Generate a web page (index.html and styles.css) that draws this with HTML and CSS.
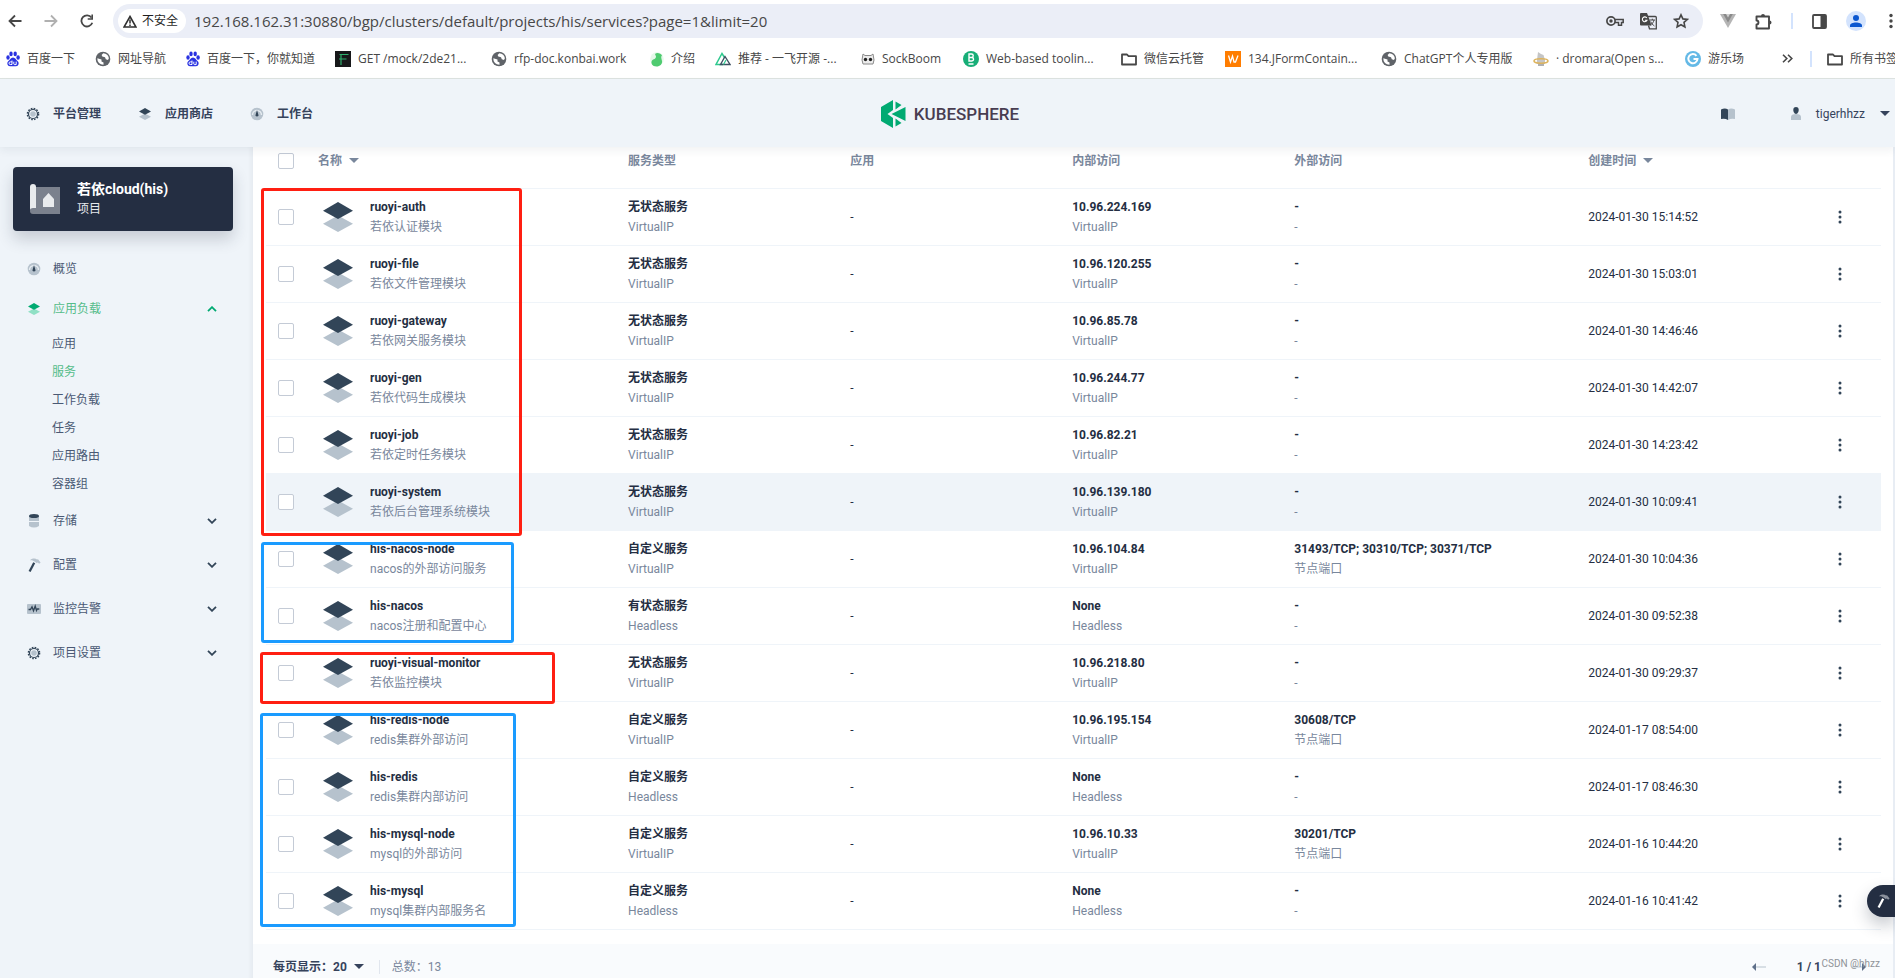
FILE: index.html
```html
<!DOCTYPE html>
<html lang="zh-CN">
<head>
<meta charset="utf-8">
<title>KubeSphere</title>
<link rel="stylesheet" href="styles.css">
</head>
<body>
<svg class="sprite" aria-hidden="true">
  <symbol id="i-layers" viewBox="0 0 30 30"><path fill="#b6c2cd" d="M15 13.500l15 8.200-15 8.300-15-8.300z"/><path fill="#324558" d="M15 0l15 8.700-15 8.300L0 8.700z"/></symbol>
  <symbol id="i-layers-green" viewBox="0 0 30 30"><path fill="#90e0c5" d="M15 13.500l15 8.200-15 8.300-15-8.300z"/><path fill="#00aa72" d="M15 0l15 8.700-15 8.300L0 8.700z"/></symbol>
  <symbol id="i-gear" viewBox="0 0 14 14"><circle cx="7" cy="7" r="5.500" fill="none" stroke="#324558" stroke-width="1.600" stroke-dasharray="1.600 1.280"/><circle cx="7" cy="7" r="4.500" fill="#eff4f9" stroke="#324558" stroke-width="1.200"/><circle cx="7" cy="7" r="2.800" fill="#b6c2cd"/></symbol>
  <symbol id="i-gauge" viewBox="0 0 14 14"><circle cx="7" cy="7" r="6.300" fill="#b6c2cd"/><path d="M2.500 8a4.500 4.500 0 0 1 9 0" fill="none" stroke="#e6ecf1" stroke-width="1.400"/><path d="M7 3l1.300 4.500a1.400 1.400 0 1 1-2.600 0z" fill="#324558"/></symbol>
  <symbol id="i-hammer" viewBox="0 0 14 14"><path fill="#324558" d="M6.200 4.300l2 .9L3.600 14l-2-.9z"/><path fill="#b6c2cd" d="M3 2.200C6 0 8.500.4 10 1.600l1-.3 2.600 3.200-1.500 1.300-1.300-1.300-1.200.6-1.700-1.400C6.800 2.600 5 2 3 2.200z"/></symbol>
  <symbol id="i-globe" viewBox="0 0 16 16"><circle cx="8" cy="8" r="7.300" fill="#5f6368"/><path fill="#fff" d="M2.300 7.300l4.200 1.300v1.800l2 1v2.300a6 6 0 0 1-6.200-6.400zM8.300 2.200L6.600 4l.7 1.500 2.700.7.800 2 2.200.8.900-1.700A6 6 0 0 0 8.300 2.200z"/></symbol>
  <symbol id="i-paw" viewBox="0 0 14 16"><g fill="#2932e1"><ellipse cx="2" cy="6.500" rx="1.700" ry="2.200"/><ellipse cx="5" cy="2.900" rx="1.700" ry="2.300"/><ellipse cx="9.200" cy="2.900" rx="1.700" ry="2.300"/><ellipse cx="12.100" cy="6.500" rx="1.700" ry="2.200"/><path d="M7 6.500c2.300 0 2.900 2.300 4.500 3.500 2.200 1.900 1 5.200-1.500 5.200H4C1.500 15.200.3 11.900 2.500 10 4.200 8.800 4.700 6.500 7 6.500z"/></g><path d="M6 9.500v4H4.300a1.200 1.200 0 0 1 0-2.600H6M7.800 10.700v2.200q0 .7.800.7h1.600v-3" fill="none" stroke="#fff"/></symbol>
  <symbol id="i-folder" viewBox="0 0 16 16"><path d="M1 3.500h5l1.500 1.700H15v8.300H1z" fill="none" stroke="#474747" stroke-width="1.800" stroke-linejoin="round"/></symbol>
  <symbol id="i-dots" viewBox="0 0 4 14"><g fill="#324558"><circle cx="2" cy="2" r="1.500"/><circle cx="2" cy="7" r="1.500"/><circle cx="2" cy="12" r="1.500"/></g></symbol>
  <symbol id="i-down" viewBox="0 0 10 6"><path d="M1 .8l4 4 4-4" fill="none" stroke="#324558" stroke-width="1.800"/></symbol>
</svg>

<div class="chrome">
  <div class="toolbar">
    <button class="tb" aria-label="后退"><svg width="14" height="14" viewBox="0 0 14 14"><path d="M13.500 7H2M7 1.500L1.500 7 7 12.500" fill="none" stroke="#474747" stroke-width="1.800"/></svg></button>
    <button class="tb" aria-label="前进"><svg width="14" height="14" viewBox="0 0 14 14"><path d="M.5 7H12M7 1.500L12.500 7 7 12.500" fill="none" stroke="#b0b0b0" stroke-width="1.800"/></svg></button>
    <button class="tb" aria-label="刷新"><svg width="14" height="14" viewBox="0 0 14 14"><path d="M12.300 8.800A5.600 5.600 0 1 1 11.500 3.500" fill="none" stroke="#474747" stroke-width="1.800"/><path d="M13 .5v5.300H7.700V4.200h3.700V.5z" fill="#474747"/></svg></button>
    <div class="omnibox">
      <button class="chip"><svg width="14" height="13" viewBox="0 0 14 13"><path d="M7 1.500L13 12H1z" fill="none" stroke="#303030" stroke-width="1.600"/><path d="M7 4.500v4M7 9.500v1.500" stroke="#303030" stroke-width="1.500"/></svg>不安全</button>
      <input class="url" type="text" aria-label="地址" value="192.168.162.31:30880/bgp/clusters/default/projects/his/services?page=1&amp;limit=20">
      <button class="tb" aria-label="密码"><svg width="18" height="12" viewBox="0 0 18 12"><circle cx="5" cy="6" r="4.100" fill="none" stroke="#474747" stroke-width="1.700"/><circle cx="5" cy="6" r="1.700" fill="#474747"/><path d="M9 4.600h8.200v2.800H15.500v2.800h-3V7.400H9" fill="none" stroke="#474747" stroke-width="1.500"/></svg></button>
      <button class="tb" aria-label="翻译"><svg width="17" height="17" viewBox="0 0 17 17"><path fill="#474747" d="M1 0h6l1 2.500 3.500 10H1a1 1 0 0 1-1-1V1a1 1 0 0 1 1-1z"/><path d="M8 3.500h7.300a1 1 0 0 1 1 1v11.300H9.500L8.500 12.500" fill="none" stroke="#474747" stroke-width="1.300"/><path d="M6.800 5A2.400 2.400 0 1 0 7 7.200H4.900" fill="none" stroke="#fff" stroke-width="1.100"/><path d="M9.500 7h5.500M12.300 5.700V7M14 7c-.5 2.500-2 4-3.500 5M10.700 8.500c.8 2 2 3.300 3.700 4.500" fill="none" stroke="#474747"/></svg></button>
      <button class="tb" aria-label="收藏"><svg width="16" height="16" viewBox="0 0 16 16"><path d="M8 1.800l1.900 4.100 4.400.5-3.300 3 .9 4.500L8 11.700l-3.900 2.200.9-4.500-3.300-3 4.400-.5z" fill="none" stroke="#474747" stroke-width="1.600"/></svg></button>
    </div>
    <div class="exts">
      <button class="tb" aria-label="Vue"><svg width="16" height="14" viewBox="0 0 16 14"><path fill="#b5b5b5" d="M0 0h16L8 14z"/><path fill="#8a8a8a" d="M3.200 0h9.600L8 8.500z"/><path fill="#d0d0d0" d="M6 0h4L8 3.500z"/></svg></button>
      <button class="tb" aria-label="扩展程序"><svg width="17" height="17" viewBox="0 0 17 17"><path d="M1.500 3.500H14v12H1.500v-4c2.600 0 2.600-4 0-4z" fill="none" stroke="#474747" stroke-width="1.900" stroke-linejoin="round"/><path fill="#474747" d="M6 3a2 2 0 0 1 4 0zM14.500 7.500a2 2 0 0 1 0 4z"/></svg></button>
      <span class="sep"></span>
      <button class="tb" aria-label="侧边栏"><svg width="15" height="15" viewBox="0 0 15 15"><rect x="1" y="1" width="13" height="13" rx="1" fill="none" stroke="#474747" stroke-width="1.800"/><path fill="#474747" d="M8.500 1H14v13H8.500z"/></svg></button>
      <button class="tb" aria-label="用户"><svg width="20" height="20" viewBox="0 0 20 20"><circle cx="10" cy="10" r="10" fill="#d3e3fd"/><circle cx="10" cy="7" r="3" fill="#0b57d0"/><path fill="#0b57d0" d="M4 16v-1.500c0-4 12-4 12 0V16z"/></svg></button>
      <button class="tb browser-menu" aria-label="菜单"><svg width="4" height="16" viewBox="0 0 4 16"><g fill="#474747"><circle cx="2" cy="2.500" r="1.700"/><circle cx="2" cy="8" r="1.700"/><circle cx="2" cy="13.500" r="1.700"/></g></svg></button>
    </div>
  </div>
  <nav class="bookmarks" aria-label="书签">
    <a href="#"><svg width="14" height="16"><use href="#i-paw"/></svg>百度一下</a>
    <a href="#"><svg width="16" height="16"><use href="#i-globe"/></svg>网址导航</a>
    <a href="#"><svg width="14" height="16"><use href="#i-paw"/></svg>百度一下，你就知道</a>
    <a href="#"><svg width="16" height="16" viewBox="0 0 16 16"><path fill="#17181a" d="M0 0h16v16H0z"/><path d="M4.500 3.500h9M6 3.500V14M4 8h7.500" fill="none" stroke="#2fae6c" stroke-width="1.200"/></svg>GET /mock/2de21...</a>
    <a href="#"><svg width="16" height="16"><use href="#i-globe"/></svg>rfp-doc.konbai.work</a>
    <a href="#"><svg width="14" height="16" viewBox="0 0 14 16"><circle cx="7" cy="8" r="6.800" fill="#e6f8ea"/><path fill="#4fcb70" d="M5 3c2-2 6-.5 7 1.500-1.500 1-.5 3 0 5.500.5 3-2 5.500-5.500 5.500C2 15.500.5 12 2 9.500 3.500 8 6 8 6 5.500z"/></svg>介绍</a>
    <a href="#"><svg width="16" height="14" viewBox="0 0 16 14"><path d="M8 12.500H1L7 1.500l2.500 4" fill="none" stroke="#2fc98f" stroke-width="1.500"/><path d="M5.500 12.500l4.500-8 5 8z" fill="none" stroke="#3e5061" stroke-width="1.400"/><path d="M8.500 12.500L11 8" stroke="#2fc98f" stroke-width="1.200"/></svg>推荐 - 一飞开源 -...</a>
    <a href="#"><svg width="14" height="14" viewBox="0 0 14 14"><path d="M2 2l2 1.500h6L12 2l1 6-1 4H2L1 8z" fill="#ececec" stroke="#8a8a8a"/><circle cx="4.500" cy="7.500" r="1.700" fill="#222"/><circle cx="9.500" cy="7.500" r="1.700" fill="#222"/></svg>SockBoom</a>
    <a href="#"><svg width="16" height="16" viewBox="0 0 16 16"><circle cx="8" cy="8" r="8" fill="#17ae77"/><path d="M6 3h2.500a1.600 1.600 0 0 1 0 3.500H6zM6 6.500h2.800a1.700 1.700 0 0 1 0 3.500H6zM5.500 13h5" fill="none" stroke="#fff" stroke-width="1.400"/></svg>Web-based toolin...</a>
    <a href="#"><svg width="16" height="16"><use href="#i-folder"/></svg>微信云托管</a>
    <a href="#"><svg width="16" height="16" viewBox="0 0 16 16"><path fill="#ff7d00" d="M0 0h16v16H0z"/><path d="M3.500 4.500L5.500 11l2-6 1.500 6h1.500L13 4.500" fill="none" stroke="#fff" stroke-width="1.300"/></svg>134.JFormContain...</a>
    <a href="#"><svg width="16" height="16"><use href="#i-globe"/></svg>ChatGPT个人专用版</a>
    <a href="#"><svg width="16" height="16" viewBox="0 0 16 16"><path fill="#c5c5c5" d="M5 1l3 2 2.500 1L12 9v4H3.500z"/><path fill="#b0b0b0" d="M5 12h6v3H5z"/><ellipse cx="8" cy="10" rx="7" ry="2.200" fill="none" stroke="#ddb35b" stroke-width="1.600"/></svg>· dromara(Open s...</a>
    <a href="#"><svg width="16" height="16" viewBox="0 0 16 16"><circle cx="8" cy="8" r="8" fill="#64b9e6"/><path d="M11.500 4.800A4.600 4.600 0 1 0 12.500 8H8.500" fill="none" stroke="#fff" stroke-width="2"/></svg>游乐场</a>
    <button class="tb more-marks" aria-label="更多书签"><svg width="11" height="9" viewBox="0 0 11 9"><path d="M1 .8l3.800 3.700L1 8.200M6 .8l3.800 3.700L6 8.200" fill="none" stroke="#474747" stroke-width="1.600"/></svg></button>
    <span class="sep"></span>
    <a href="#"><svg width="16" height="16"><use href="#i-folder"/></svg>所有书签</a>
  </nav>
</div>

<header class="header">
  <nav class="topnav">
    <a href="#"><svg width="14" height="14"><use href="#i-gear"/></svg>平台管理</a>
    <a href="#"><svg width="14" height="12"><use href="#i-layers"/></svg>应用商店</a>
    <a href="#"><svg width="14" height="14"><use href="#i-gauge"/></svg>工作台</a>
  </nav>
  <a class="logo" href="#"><svg width="25" height="28" viewBox="0 0 25 28"><g fill="#00aa72"><path d="M0 7L12 0v10L6.500 14l5.500 4v10L0 21z"/><path d="M14.500 1.500L20.500 5l-6 4.500z"/><path d="M14.500 26.500l6-3.500-6-4.500z"/><path d="M24.500 7v14L10.500 14z"/></g></svg>KUBESPHERE</a>
  <div class="userbar">
    <button class="tb" aria-label="文档"><svg width="14" height="12" viewBox="0 0 14 12"><path fill="#324558" d="M0 1.500Q4-.5 7 1.500V12Q4 10 0 11z"/><path fill="#b6c2cd" d="M14 1.500Q10-.5 7 1.500V12q3-2 7-1z"/></svg></button>
    <button class="user"><svg width="10" height="13" viewBox="0 0 10 13"><path fill="#b6c2cd" d="M0 13v-3q0-3 5-3t5 3v3z"/><path fill="#324558" d="M5 0c3 0 3 3 2.300 5Q6.500 7 5 7T2.700 5C2 3 2 0 5 0z"/></svg>tigerhhzz<i class="caret"></i></button>
  </div>
</header>

<div class="layout">
  <aside class="sidebar">
    <div class="project">
      <svg width="30" height="30" viewBox="0 0 30 30"><path fill="#7b818d" d="M6 3h24v27H3z"/><rect width="6" height="27" rx="3" fill="#e9ebed"/><path fill="#7b818d" d="M0 27a3 3 0 0 1 3-3h3v6H3a3 3 0 0 1-3-3z"/><path fill="#e9ebed" d="M18.500 9l5.500 6v8H13v-8z"/></svg>
      <div><strong>若依cloud(his)</strong><span>项目</span></div>
    </div>
    <nav class="menu">
      <a class="item" href="#"><svg width="14" height="14"><use href="#i-gauge"/></svg>概览</a>
      <a class="item active" href="#"><svg width="14" height="12"><use href="#i-layers-green"/></svg>应用负载<svg class="chev" width="10" height="6" viewBox="0 0 10 6"><path d="M1 5.200l4-4 4 4" fill="none" stroke="#00aa72" stroke-width="1.800"/></svg></a>
      <div class="submenu">
        <a href="#">应用</a><a class="active" href="#">服务</a><a href="#">工作负载</a><a href="#">任务</a><a href="#">应用路由</a><a href="#">容器组</a>
      </div>
      <a class="item" href="#"><svg width="14" height="14" viewBox="0 0 14 14"><path fill="#b6c2cd" d="M2 2h10v5H2zM2 8h10v4q-5 3-10 0z"/><ellipse cx="7" cy="2" rx="5" ry="2" fill="#324558"/></svg>存储<svg class="chev" width="10" height="6"><use href="#i-down"/></svg></a>
      <a class="item" href="#"><svg width="14" height="14"><use href="#i-hammer"/></svg>配置<svg class="chev" width="10" height="6"><use href="#i-down"/></svg></a>
      <a class="item" href="#"><svg width="14" height="14" viewBox="0 0 14 14"><rect y="2" width="14" height="10" rx="1" fill="#b6c2cd"/><path d="M1.500 7.500h2L5 4.800l1.500 4L8.200 4l1.300 4.500.8-1.500h2" fill="none" stroke="#324558" stroke-width="1.300"/></svg>监控告警<svg class="chev" width="10" height="6"><use href="#i-down"/></svg></a>
      <a class="item" href="#"><svg width="14" height="14"><use href="#i-gear"/></svg>项目设置<svg class="chev" width="10" height="6"><use href="#i-down"/></svg></a>
    </nav>
  </aside>

  <main class="content">
    <table class="services">
      <colgroup><col class="c-check"><col class="c-name"><col class="c-mid"><col class="c-mid"><col class="c-mid"><col class="c-ext"><col><col class="c-more"></colgroup>
      <thead>
        <tr><th><input type="checkbox" aria-label="全选"></th><th>名称<i class="caret"></i></th><th>服务类型</th><th>应用</th><th>内部访问</th><th>外部访问</th><th>创建时间<i class="caret"></i></th><th></th></tr>
      </thead>
      <tbody>
        <tr><td><input type="checkbox" aria-label="ruoyi-auth"></td><td><div class="name"><svg width="30" height="30"><use href="#i-layers"/></svg><div><b>ruoyi-auth</b><small>若依认证模块</small></div></div></td><td><b>无状态服务</b><small>VirtualIP</small></td><td>-</td><td><b>10.96.224.169</b><small>VirtualIP</small></td><td><b>-</b><small>-</small></td><td>2024-01-30 15:14:52</td><td><button class="tb" aria-label="操作"><svg width="4" height="14"><use href="#i-dots"/></svg></button></td></tr>
        <tr><td><input type="checkbox" aria-label="ruoyi-file"></td><td><div class="name"><svg width="30" height="30"><use href="#i-layers"/></svg><div><b>ruoyi-file</b><small>若依文件管理模块</small></div></div></td><td><b>无状态服务</b><small>VirtualIP</small></td><td>-</td><td><b>10.96.120.255</b><small>VirtualIP</small></td><td><b>-</b><small>-</small></td><td>2024-01-30 15:03:01</td><td><button class="tb" aria-label="操作"><svg width="4" height="14"><use href="#i-dots"/></svg></button></td></tr>
        <tr><td><input type="checkbox" aria-label="ruoyi-gateway"></td><td><div class="name"><svg width="30" height="30"><use href="#i-layers"/></svg><div><b>ruoyi-gateway</b><small>若依网关服务模块</small></div></div></td><td><b>无状态服务</b><small>VirtualIP</small></td><td>-</td><td><b>10.96.85.78</b><small>VirtualIP</small></td><td><b>-</b><small>-</small></td><td>2024-01-30 14:46:46</td><td><button class="tb" aria-label="操作"><svg width="4" height="14"><use href="#i-dots"/></svg></button></td></tr>
        <tr><td><input type="checkbox" aria-label="ruoyi-gen"></td><td><div class="name"><svg width="30" height="30"><use href="#i-layers"/></svg><div><b>ruoyi-gen</b><small>若依代码生成模块</small></div></div></td><td><b>无状态服务</b><small>VirtualIP</small></td><td>-</td><td><b>10.96.244.77</b><small>VirtualIP</small></td><td><b>-</b><small>-</small></td><td>2024-01-30 14:42:07</td><td><button class="tb" aria-label="操作"><svg width="4" height="14"><use href="#i-dots"/></svg></button></td></tr>
        <tr><td><input type="checkbox" aria-label="ruoyi-job"></td><td><div class="name"><svg width="30" height="30"><use href="#i-layers"/></svg><div><b>ruoyi-job</b><small>若依定时任务模块</small></div></div></td><td><b>无状态服务</b><small>VirtualIP</small></td><td>-</td><td><b>10.96.82.21</b><small>VirtualIP</small></td><td><b>-</b><small>-</small></td><td>2024-01-30 14:23:42</td><td><button class="tb" aria-label="操作"><svg width="4" height="14"><use href="#i-dots"/></svg></button></td></tr>
        <tr class="hovered"><td><input type="checkbox" aria-label="ruoyi-system"></td><td><div class="name"><svg width="30" height="30"><use href="#i-layers"/></svg><div><b>ruoyi-system</b><small>若依后台管理系统模块</small></div></div></td><td><b>无状态服务</b><small>VirtualIP</small></td><td>-</td><td><b>10.96.139.180</b><small>VirtualIP</small></td><td><b>-</b><small>-</small></td><td>2024-01-30 10:09:41</td><td><button class="tb" aria-label="操作"><svg width="4" height="14"><use href="#i-dots"/></svg></button></td></tr>
        <tr><td><input type="checkbox" aria-label="his-nacos-node"></td><td><div class="name"><svg width="30" height="30"><use href="#i-layers"/></svg><div><b>his-nacos-node</b><small>nacos的外部访问服务</small></div></div></td><td><b>自定义服务</b><small>VirtualIP</small></td><td>-</td><td><b>10.96.104.84</b><small>VirtualIP</small></td><td><b>31493/TCP; 30310/TCP; 30371/TCP</b><small>节点端口</small></td><td>2024-01-30 10:04:36</td><td><button class="tb" aria-label="操作"><svg width="4" height="14"><use href="#i-dots"/></svg></button></td></tr>
        <tr><td><input type="checkbox" aria-label="his-nacos"></td><td><div class="name"><svg width="30" height="30"><use href="#i-layers"/></svg><div><b>his-nacos</b><small>nacos注册和配置中心</small></div></div></td><td><b>有状态服务</b><small>Headless</small></td><td>-</td><td><b>None</b><small>Headless</small></td><td><b>-</b><small>-</small></td><td>2024-01-30 09:52:38</td><td><button class="tb" aria-label="操作"><svg width="4" height="14"><use href="#i-dots"/></svg></button></td></tr>
        <tr><td><input type="checkbox" aria-label="ruoyi-visual-monitor"></td><td><div class="name"><svg width="30" height="30"><use href="#i-layers"/></svg><div><b>ruoyi-visual-monitor</b><small>若依监控模块</small></div></div></td><td><b>无状态服务</b><small>VirtualIP</small></td><td>-</td><td><b>10.96.218.80</b><small>VirtualIP</small></td><td><b>-</b><small>-</small></td><td>2024-01-30 09:29:37</td><td><button class="tb" aria-label="操作"><svg width="4" height="14"><use href="#i-dots"/></svg></button></td></tr>
        <tr><td><input type="checkbox" aria-label="his-redis-node"></td><td><div class="name"><svg width="30" height="30"><use href="#i-layers"/></svg><div><b>his-redis-node</b><small>redis集群外部访问</small></div></div></td><td><b>自定义服务</b><small>VirtualIP</small></td><td>-</td><td><b>10.96.195.154</b><small>VirtualIP</small></td><td><b>30608/TCP</b><small>节点端口</small></td><td>2024-01-17 08:54:00</td><td><button class="tb" aria-label="操作"><svg width="4" height="14"><use href="#i-dots"/></svg></button></td></tr>
        <tr><td><input type="checkbox" aria-label="his-redis"></td><td><div class="name"><svg width="30" height="30"><use href="#i-layers"/></svg><div><b>his-redis</b><small>redis集群内部访问</small></div></div></td><td><b>自定义服务</b><small>Headless</small></td><td>-</td><td><b>None</b><small>Headless</small></td><td><b>-</b><small>-</small></td><td>2024-01-17 08:46:30</td><td><button class="tb" aria-label="操作"><svg width="4" height="14"><use href="#i-dots"/></svg></button></td></tr>
        <tr><td><input type="checkbox" aria-label="his-mysql-node"></td><td><div class="name"><svg width="30" height="30"><use href="#i-layers"/></svg><div><b>his-mysql-node</b><small>mysql的外部访问</small></div></div></td><td><b>自定义服务</b><small>VirtualIP</small></td><td>-</td><td><b>10.96.10.33</b><small>VirtualIP</small></td><td><b>30201/TCP</b><small>节点端口</small></td><td>2024-01-16 10:44:20</td><td><button class="tb" aria-label="操作"><svg width="4" height="14"><use href="#i-dots"/></svg></button></td></tr>
        <tr><td><input type="checkbox" aria-label="his-mysql"></td><td><div class="name"><svg width="30" height="30"><use href="#i-layers"/></svg><div><b>his-mysql</b><small>mysql集群内部服务名</small></div></div></td><td><b>自定义服务</b><small>Headless</small></td><td>-</td><td><b>None</b><small>Headless</small></td><td><b>-</b><small>-</small></td><td>2024-01-16 10:41:42</td><td><button class="tb" aria-label="操作"><svg width="4" height="14"><use href="#i-dots"/></svg></button></td></tr>
      </tbody>
    </table>
    <footer class="pager">
      <button class="pagesize">每页显示：20<i class="caret"></i></button>
      <span class="total">总数：13</span>
      <div class="pages">
        <button class="tb" aria-label="上一页"><svg width="14" height="8" viewBox="0 0 14 8"><path fill="#b6c2cd" d="M3 3.500h11v1H3z"/><path fill="#5f708a" d="M0 4l4-4v8z"/></svg></button>
        <b>1 / 1</b>
        <button class="tb" aria-label="下一页"><svg width="14" height="8" viewBox="0 0 14 8"><path fill="#b6c2cd" d="M0 3.500h11v1H0z"/><path fill="#5f708a" d="M14 4l-4-4v8z"/></svg></button>
        <span class="watermark">CSDN @hhzz</span>
      </div>
    </footer>
    <div class="mark mark-ruoyi"></div>
    <div class="mark blue mark-nacos"></div>
    <div class="mark mark-monitor"></div>
    <div class="mark blue mark-data"></div>
    <button class="toolbox" aria-label="工具箱"><svg width="14" height="16" viewBox="0 0 14 14"><path fill="#fff" d="M6.200 4.300l2 .9L3.600 14l-2-.9z"/><path fill="#8b919d" d="M3 2.200C6 0 8.500.4 10 1.600l1-.3 2.600 3.200-1.500 1.300-1.300-1.300-1.200.6-1.700-1.400C6.800 2.600 5 2 3 2.200z"/></svg></button>
  </main>
</div>
</body>
</html>
```

FILE: styles.css
```css
* { box-sizing: border-box; }

body {
  margin: 0;
  min-height: 100vh;
  display: flex;
  flex-direction: column;
  overflow: hidden;
  background: #eff4f9;
  color: #242e42;
  font: 12px/20px Roboto, "Noto Sans CJK SC", sans-serif;
}

a { color: inherit; text-decoration: none; }
svg { display: block; flex: none; }
button { border: 0; background: none; padding: 0; font: inherit; color: inherit; }
.tb { flex: none; display: flex; align-items: center; justify-content: center; }
.sprite { position: absolute; width: 0; height: 0; }

.caret {
  display: inline-block;
  border: 5px solid transparent;
  border-top-color: currentColor;
  border-bottom: 0;
}

/* Browser bars */
.chrome {
  background: #fff;
  border-bottom: 1px solid #dde3e1;
  font-family: "Open Sans", "Noto Sans CJK SC", sans-serif;
  color: #474747;
}
.toolbar { display: flex; align-items: center; gap: 22px; padding: 4px 2px 0 8px; }
.omnibox {
  flex: 1;
  display: flex;
  align-items: center;
  gap: 16px;
  height: 34px;
  margin-left: -3px;
  padding: 0 14px 0 5px;
  border-radius: 17px;
  background: #ebeef7;
}
.chip {
  display: flex;
  align-items: center;
  gap: 5px;
  height: 24px;
  padding: 0 8px 0 5px;
  border-radius: 12px;
  background: #fff;
  color: #1f1f1f;
}
.url {
  flex: 1;
  min-width: 0;
  margin-left: -8px;
  padding: 0;
  border: 0;
  background: none;
  color: #474747;
  font: 15px/20px "Open Sans", sans-serif;
}
.exts { display: flex; align-items: center; gap: 19px; margin-left: -5px; }
.browser-menu { margin-left: 4px; }
.sep { width: 2px; height: 16px; background: #d3e3fd; }

.bookmarks {
  display: grid;
  grid-template-columns: 89px 91px 149px 156px 159px 65px 146px 102px 158px 104px 156px 152px 152px 97px 28px 17px 1fr;
  align-items: center;
  height: 40px;
  padding: 1px 0 0 6px;
  white-space: nowrap;
}
.bookmarks a { display: flex; align-items: center; gap: 7px; overflow: hidden; }
.more-marks { justify-content: flex-start; }

/* Console header */
.header {
  position: relative;
  z-index: 2;
  display: grid;
  grid-template-columns: 1fr auto 1fr;
  align-items: center;
  height: 68px;
  padding: 1px 5px 0 10px;
  background: #eff4f9;
  box-shadow: 0 4px 8px rgba(36, 46, 66, 0.06);
  color: #36435c;
}
.topnav { display: flex; gap: 37px; padding-left: 16px; font-weight: 700; }
.topnav a { display: flex; align-items: center; gap: 13px; }
.logo {
  display: flex;
  align-items: center;
  gap: 8px;
  color: #483d51;
  font: 500 17px/28px Roboto, sans-serif;
}
.userbar { display: flex; justify-content: flex-end; gap: 56px; }
.user { display: flex; align-items: center; gap: 15px; }

.layout { flex: 1; display: grid; grid-template-columns: 253px 1fr; }

/* Sidebar */
.sidebar { padding: 20px 20px 0 13px; color: #4a5974; box-shadow: inset -4px 0 4px -2px rgba(36, 46, 66, 0.05); }
.project {
  display: flex;
  align-items: center;
  gap: 17px;
  height: 64px;
  padding: 0 17px;
  border-radius: 4px;
  background: #242e42;
  box-shadow: 0 8px 16px rgba(36, 46, 66, 0.2);
  color: #e6e8ec;
}
.project strong, .project span { display: block; }
.project strong { color: #fff; font-size: 14px; }
.menu { margin-top: 16px; }
.item { display: flex; align-items: center; gap: 12px; height: 44px; padding: 0 16px 0 14px; }
.item.active { height: 36px; }
.chev { margin-left: auto; }
.active { color: #55bc8a; }
.submenu { padding: 3px 0 1px 39px; }
.submenu a { display: block; line-height: 28px; }

/* Services table */
.content { position: relative; background: #fff; border-right: 2px solid #e8edf4; }
.services { width: calc(100% - 25px); margin: 0 12px 0 13px; border-collapse: collapse; table-layout: fixed; }
.c-check, .c-more { width: 52px; }
.c-name { width: 19.2%; }
.c-mid { width: 13.75%; }
.c-ext { width: 18.2%; }
.services th {
  height: 41px;
  padding: 0 0 13px;
  border-bottom: 1px solid #eff4f9;
  text-align: left;
  font-weight: 700;
  color: #79879c;
}
.services th .caret { margin-left: 7px; vertical-align: 2px; }
.services td { padding: 8px 0; border-bottom: 1px solid #eff4f9; white-space: nowrap; }
.services th:first-child, .services td:first-child { padding-left: 12px; }
.services b, .services small { display: block; font-size: 12px; }
.services small { color: #79879c; }
.name { display: flex; align-items: center; gap: 17px; padding-left: 5px; }
.services .tb { width: 22px; height: 20px; }
.hovered { background: #eff4f9; }
input[type="checkbox"] {
  display: block;
  appearance: none;
  width: 16px;
  height: 16px;
  margin: 0;
  border: 1px solid #c4cbd6;
  border-radius: 2px;
  background: #fff;
}

.pager {
  display: flex;
  align-items: center;
  margin-top: 14px;
  padding: 13px 27px 3px 20px;
  background: #f9fbfd;
}
.pagesize { font-weight: 700; color: #36435c; padding-right: 15px; border-right: 1px solid #e1e6ee; line-height: 14px; }
.pagesize .caret { margin-left: 7px; vertical-align: 2px; }
.total { margin-left: 12px; color: #79879c; }
.pages { position: relative; display: flex; align-items: center; gap: 31px; margin-left: auto; color: #36435c; }
.watermark { position: absolute; right: -14px; top: -3px; color: #8f9399; font-size: 10px; }

/* Highlight frames over groups of rows */
.mark { position: absolute; border: 3px solid #ff1f12; border-radius: 3px; pointer-events: none; }
.mark.blue { border-color: #1a9bff; }
.mark-ruoyi { left: 8px; top: 41px; width: 261px; height: 348px; }
.mark-nacos { left: 8px; top: 395px; width: 253px; height: 101px; }
.mark-monitor { left: 7px; top: 505px; width: 295px; height: 52px; }
.mark-data { left: 7px; top: 566px; width: 256px; height: 214px; }

.toolbox {
  position: absolute;
  right: -2px;
  top: 738px;
  width: 28px;
  height: 32px;
  padding-left: 9px;
  border-radius: 16px 0 0 16px;
  background: #242e42;
  box-shadow: 0 8px 16px rgba(36, 46, 66, 0.25);
}
```
